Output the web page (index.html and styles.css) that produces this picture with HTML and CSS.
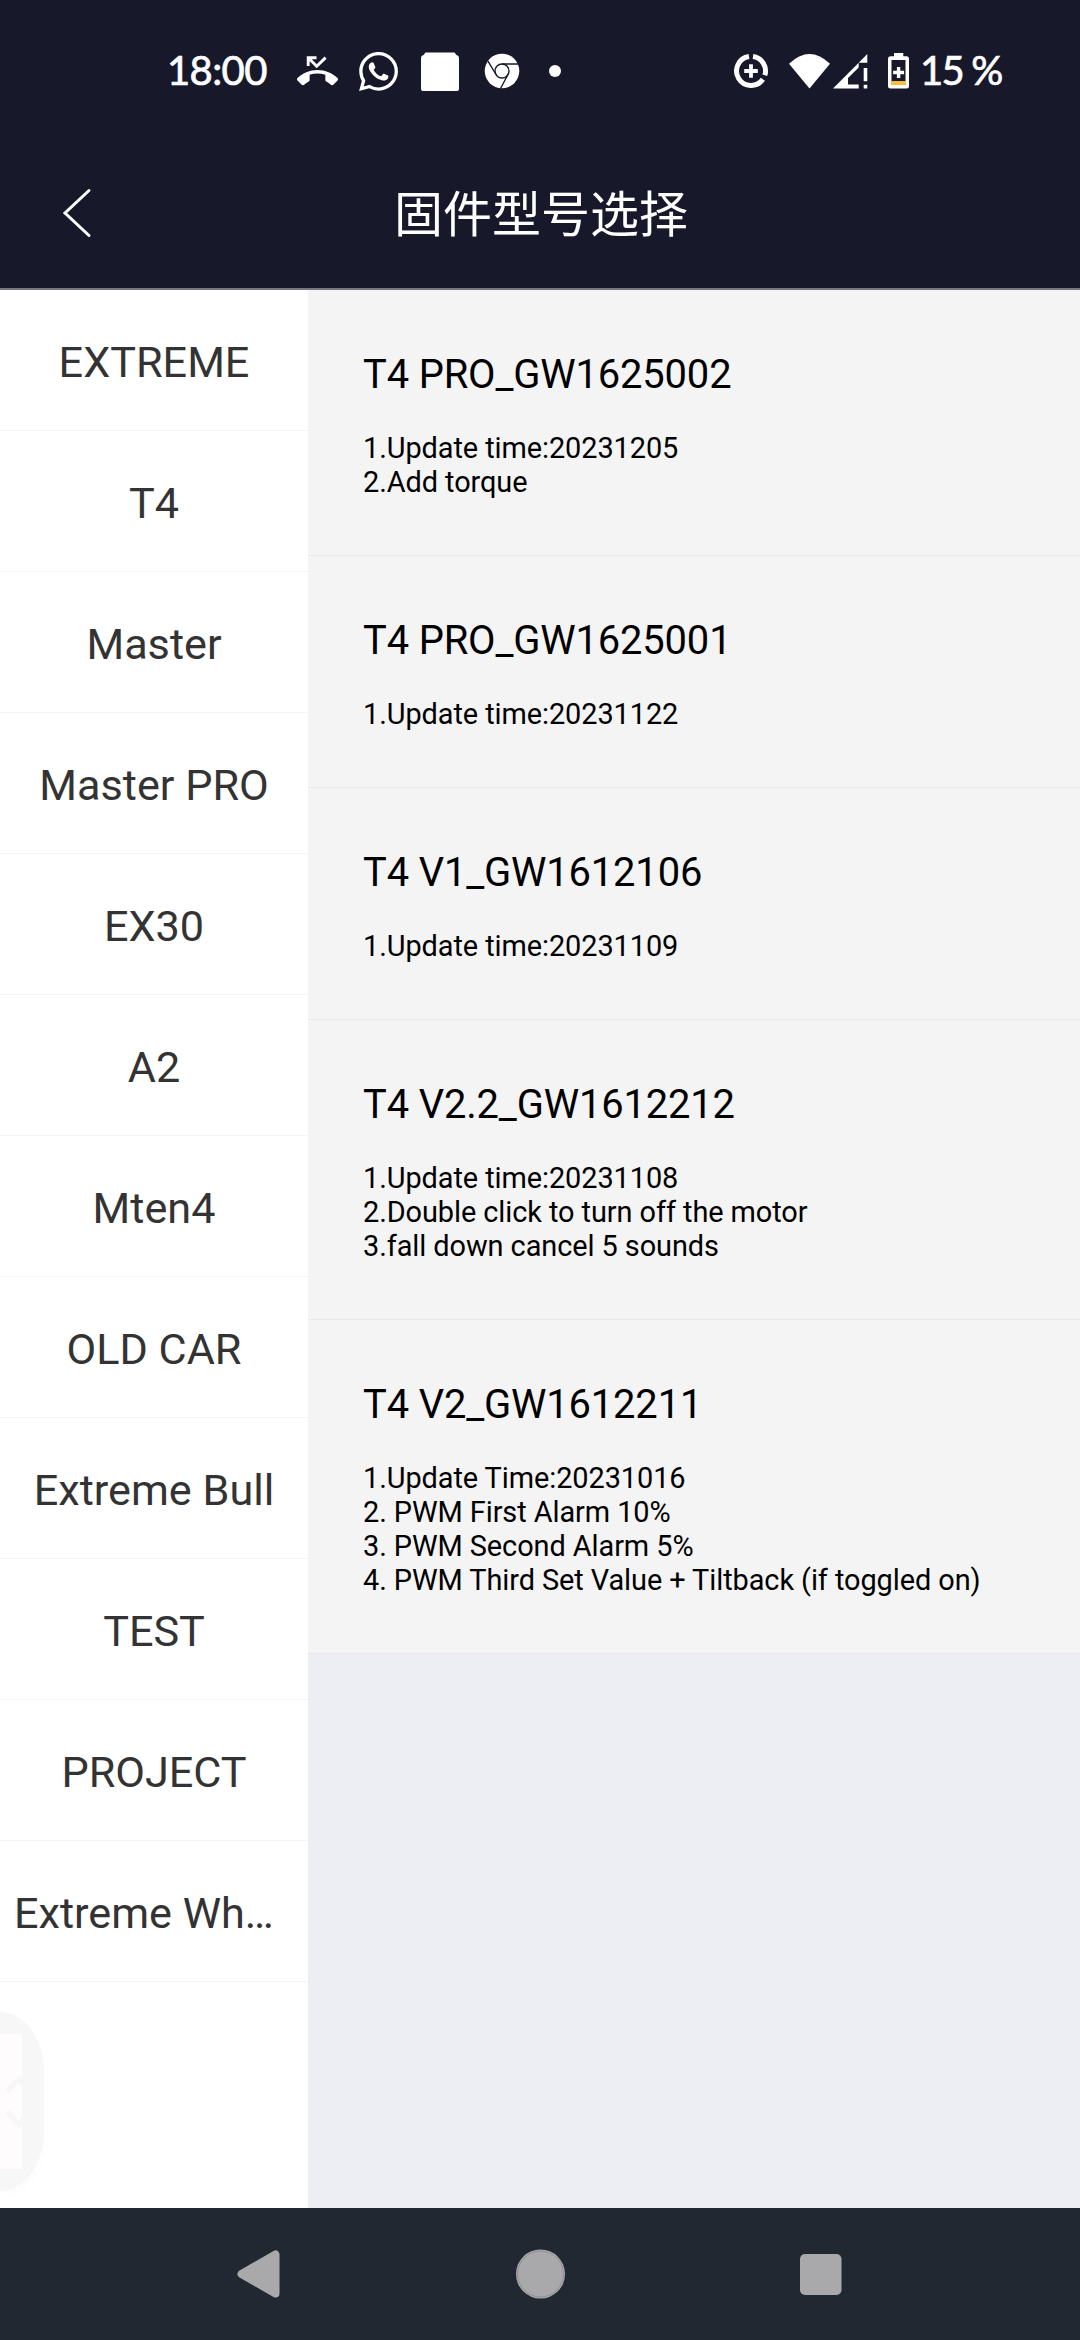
FILE: index.html
```html
<!DOCTYPE html>
<html lang="zh">
<head>
  <meta charset="UTF-8">
  <meta name="viewport" content="width=device-width, initial-scale=1.0">
  <title>固件型号选择</title>
  <link rel="stylesheet" href="styles.css">
</head>
<body>

  <div class="status_bar">
    <div class="status_left">
      <span class="status_text time">18:00</span>
      <svg class="icon_missed" width="41" height="31" viewBox="0 0 41 31">
        <path d="M19.5 1.7H11.2V10M11.5 2L19.7 10.2L28.6 1.6" fill="none" stroke="#fff" stroke-width="2.9"/>
        <path transform="translate(0 -6.4) scale(1.708)" fill="#fff" d="M23.71 16.67C20.66 13.78 16.54 12 12 12 7.46 12 3.34 13.78.29 16.67c-.18.18-.29.43-.29.71 0 .28.11.53.29.71l2.48 2.48c.18.18.43.29.71.29.27 0 .52-.11.7-.28.79-.74 1.69-1.36 2.66-1.85.33-.16.56-.5.56-.9v-3.1c1.45-.48 3-.73 4.6-.73s3.15.25 4.6.72v3.1c0 .39.23.74.56.9.98.49 1.87 1.12 2.67 1.85.18.18.43.28.7.28.28 0 .53-.11.71-.29l2.48-2.48c.18-.18.29-.43.29-.71 0-.28-.12-.52-.3-.7z"/>
      </svg>
      <svg class="icon_whatsapp" width="39" height="39" viewBox="0 0 24 24">
        <path fill="#fff" d="M17.472 14.382c-.297-.149-1.758-.867-2.03-.967-.273-.099-.471-.148-.67.15-.197.297-.767.966-.94 1.164-.173.199-.347.223-.644.075-.297-.15-1.255-.463-2.39-1.475-.883-.788-1.48-1.761-1.653-2.059-.173-.297-.018-.458.13-.606.134-.133.298-.347.446-.52.149-.174.198-.298.298-.497.099-.198.05-.371-.025-.52-.075-.149-.669-1.612-.916-2.207-.242-.579-.487-.5-.669-.51-.173-.008-.371-.01-.57-.01-.198 0-.52.074-.792.372-.272.297-1.04 1.016-1.04 2.479 0 1.462 1.065 2.875 1.213 3.074.149.198 2.096 3.2 5.077 4.487.709.306 1.262.489 1.694.625.712.227 1.36.195 1.871.118.571-.085 1.758-.719 2.006-1.413.248-.694.248-1.289.173-1.413-.074-.124-.272-.198-.57-.347m-5.421 7.403h-.004a9.87 9.87 0 01-5.031-1.378l-.361-.214-3.741.982.998-3.648-.235-.374a9.86 9.86 0 01-1.51-5.26c.001-5.45 4.436-9.884 9.888-9.884 2.64 0 5.122 1.03 6.988 2.898a9.825 9.825 0 012.893 6.994c-.003 5.45-4.437 9.884-9.885 9.884m8.413-18.297A11.815 11.815 0 0012.05 0C5.495 0 .16 5.335.157 11.892c0 2.096.547 4.142 1.588 5.945L.057 24l6.305-1.654a11.882 11.882 0 005.683 1.448h.005c6.554 0 11.89-5.335 11.893-11.893a11.821 11.821 0 00-3.48-8.413z"/>
      </svg>
      <svg class="icon_square" width="38" height="39" viewBox="0 0 38 39">
        <path fill="#fff" d="M4.5 .5H33.500L35.500 3Q38 3.500 38 6V37Q38 39 36 39H2Q0 39 0 37V6Q0 3.500 2.500 3Z"/>
      </svg>
      <svg class="icon_chrome" width="36" height="36" viewBox="0 0 36 36">
        <circle cx="18" cy="18" r="17.3" fill="#fff"/>
        <g fill="none" stroke="#17192b" stroke-width="1.4">
          <circle cx="18" cy="18" r="7"/>
          <path d="M18 11H34M12 21.500L4 8.200M24 21.500L16.500 35.500"/>
        </g>
      </svg>
      <span class="more_dot"></span>
    </div>
    <div class="status_right">
      <svg class="icon_saver" width="36" height="36" viewBox="0 0 36 36" fill="none" stroke="#fff">
        <path d="M20 3.600A14.500 14.500 0 0 1 31.900 22.200M29.900 26.300A14.500 14.500 0 1 1 16 3.600" stroke-width="5"/>
        <path d="M18 11.200V24.800M11.200 18H24.800" stroke-width="3.800"/>
      </svg>
      <svg class="icon_wifi" width="41" height="35" viewBox="0 0 41 35">
        <path fill="#fff" d="M0 9.700Q20.500 -9.700 41 9.700L20.500 34.500Z"/>
      </svg>
      <svg class="icon_signal" width="35" height="35" viewBox="0 0 35 35">
        <path fill="#fff" d="M34.300 0V8.700H25.700ZM0 34.500L25.700 8.700V13.500L15 24V30.500H25.700V34.500ZM30.700 14H34.300V27.300H30.700ZM30.700 30.700H34.300V34.500H30.700Z"/>
      </svg>
      <svg class="icon_battery" width="21" height="36" viewBox="0 0 21 36">
        <path d="M6 0H15.300V4H6Z" fill="#fff"/>
        <rect x="0" y="3.300" width="21" height="32.300" rx="2.500" fill="#fff"/>
        <path d="M3.500 7H17.500V28H3.500Z" fill="#17192b"/>
        <path d="M3 28H18V32H3Z" fill="#f6bf40"/>
        <path d="M10.600 14V25M5.100 19.500H16.100" stroke="#fff" stroke-width="3.400"/>
      </svg>
      <span class="status_text percent">15 %</span>
    </div>
  </div>

  <header>
    <svg class="back" width="30" height="50" viewBox="0 0 30 50">
      <path d="M27 2.500L3 25L27 47.500" fill="none" stroke="#fff" stroke-width="3" stroke-linecap="round"/>
    </svg>
    <h1>固件型号选择</h1>
  </header>

  <div class="container">
    <ul class="models">
      <li>EXTREME</li>
      <li>T4</li>
      <li>Master</li>
      <li>Master PRO</li>
      <li>EX30</li>
      <li>A2</li>
      <li>Mten4</li>
      <li>OLD CAR</li>
      <li>Extreme Bull</li>
      <li>TEST</li>
      <li>PROJECT</li>
      <li class="cut">Extreme Wh…</li>
    </ul>

    <div class="firmware_list">
      <div class="firmware">
        <h2>T4 PRO_GW1625002</h2>
        <p>1.Update time:20231205<br>2.Add torque</p>
      </div>
      <div class="firmware">
        <h2>T4 PRO_GW1625001</h2>
        <p>1.Update time:20231122</p>
      </div>
      <div class="firmware">
        <h2>T4 V1_GW1612106</h2>
        <p>1.Update time:20231109</p>
      </div>
      <div class="firmware">
        <h2>T4 V2.2_GW1612212</h2>
        <p>1.Update time:20231108<br>2.Double click to turn off the motor<br>3.fall down cancel 5 sounds</p>
      </div>
      <div class="firmware">
        <h2>T4 V2_GW1612211</h2>
        <p>1.Update Time:20231016<br>2. PWM First Alarm 10%<br>3. PWM Second Alarm 5%<br>4. PWM Third Set Value + Tiltback (if toggled on)</p>
      </div>
    </div>

    <!-- floating button, half off the left edge -->
    <div class="float_button">
      <svg width="22" height="135" viewBox="0 0 22 135">
        <path d="M0 0H22V135H0Z" fill="#fffcfd"/>
        <path d="M7 57L19 45L25 51M7 78L19 90L25 84" fill="none" stroke="#f7f7f7" stroke-width="5.500"/>
      </svg>
    </div>
  </div>

  <nav>
    <svg width="60" height="60" viewBox="0 0 60 60">
      <path d="M11.500 30L45.500 10.500V49.500Z" fill="#a9a9ac" stroke="#a9a9ac" stroke-width="8" stroke-linejoin="round"/>
    </svg>
    <svg width="60" height="60" viewBox="0 0 60 60">
      <circle cx="30.500" cy="30" r="24.500" fill="#a9a9ac"/>
      <circle cx="30.500" cy="30" r="23" fill="none" stroke="#8e9094" stroke-width="1"/>
    </svg>
    <svg width="60" height="60" viewBox="0 0 60 60">
      <rect x="10" y="10" width="41.500" height="41" rx="5" fill="#a9a9ac"/>
    </svg>
  </nav>

</body>
</html>
```
FILE: styles.css
```css
* {
  box-sizing: border-box;
  padding: 0;
  margin: 0;
}

body {
  display: flex;
  flex-direction: column;
  width: 1080px;
  height: 2340px;
  overflow: hidden;
  background-color: #edeef3;
  font-family: Roboto, "Noto Sans CJK SC", sans-serif;
}
svg {
  display: block;
  flex-shrink: 0;
}

/* barra de status */
.status_bar {
  display: flex;
  justify-content: space-between;
  height: 142px;
  padding: 0 79px 0 167px;
  background-color: #17192b;
}
.status_left,
.status_right {
  display: flex;
  align-items: center;
  height: 142px;
}
.status_text {
  padding-bottom: 2px;
  font-family: Lato, sans-serif;
  font-size: 40px;
  line-height: 48px;
  color: white;
  white-space: nowrap;
  -webkit-text-stroke: 0.7px white;
}
.time {
  width: 130px;
  letter-spacing: -0.6px;
}
.percent {
  width: 81px;
  margin-left: 11px;
  letter-spacing: -1.8px;
}
.icon_whatsapp {
  margin-left: 21px;
}
.icon_square {
  margin-left: 23px;
}
.icon_chrome {
  margin-left: 25px;
}
.more_dot {
  width: 12px;
  height: 12px;
  margin-left: 29px;
  border-radius: 50%;
  background-color: white;
}
.icon_wifi {
  margin-left: 20px;
}
.icon_signal {
  margin-left: 3px;
}
.icon_battery {
  margin-left: 20px;
}

header {
  display: flex;
  align-items: center;
  height: 148px;
  padding: 0 62px 4px 62px;
  border-bottom: 2px solid #76777f;
  background-color: #17192b;
}
header h1 {
  flex: 1;
  padding-right: 28px;
  padding-bottom: 4px;
  text-align: center;
  color: white;
  font-family: "Noto Sans CJK SC", sans-serif;
  font-size: 49px;
  font-weight: 400;
  line-height: 72px;
}

.container {
  display: flex;
  position: relative;
  height: 1918px;
}
.models {
  width: 308px;
  background-color: white;
  list-style: none;
}
.models li {
  height: 141px;
  padding: 47px 14px 0 14px;
  border-bottom: 1px solid #f4f4f4;
  color: #333333;
  font-size: 43.2px;
  line-height: 52px;
  text-align: center;
  white-space: nowrap;
}
.models .cut {
  text-align: left;
}

.firmware_list {
  flex: 1;
}
.firmware {
  padding: 61px 55px 56px 55px;
  border-bottom: 1px solid #e8e8e8;
  background-color: #f4f4f4;
  color: black;
}
.firmware h2 {
  margin-bottom: 33px;
  font-size: 39.9px;
  font-weight: 400;
  line-height: 47px;
  letter-spacing: -0.15px;
}
.firmware p {
  font-size: 28.9px;
  line-height: 34px;
  letter-spacing: -0.07px;
  white-space: nowrap;
}

.float_button {
  position: absolute;
  left: 0;
  top: 1722px;
  width: 44px;
  height: 179px;
  padding-top: 22px;
  border-radius: 0 44px 44px 0 / 0 60px 60px 0;
  background-color: #f7f7f7;
  box-shadow: 2px 6px 10px rgba(0, 0, 0, 0.01);
}

nav {
  display: flex;
  justify-content: space-between;
  align-items: center;
  height: 132px;
  padding: 0 230px;
  background-color: #222831;
}
```
